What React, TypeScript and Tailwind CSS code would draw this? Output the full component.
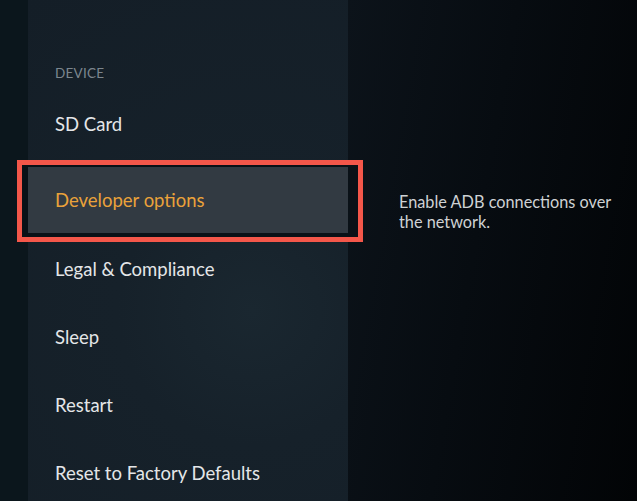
const items = ["Legal & Compliance", "Sleep", "Restart", "Reset to Factory Defaults"];

export default function App() {
  return (
    <div className="flex h-[501px] w-[637px] overflow-hidden bg-[#05090d] font-['Lato',sans-serif]">
      <div className="w-[28px] shrink-0 bg-[#0b161c]" />
      <div className="relative w-[320px] shrink-0 bg-[radial-gradient(circle_at_70%_62%,#1a2730_0%,#16212a_35%,#141e27_100%)]">
        <div className="pl-[27px] pt-[66px] text-[13.5px] leading-[14px] tracking-[0.02em] text-[#7c868e]">DEVICE</div>
        <div className="mt-[10px] flex h-[68px] items-center pl-[27px] pt-[2px] text-[18.5px] text-[#e4e6e8]">SD Card</div>
        <div className="relative mt-[9px] mb-[2px]">
          <div className="absolute left-[-6px] right-[-10px] top-[-2px] bottom-[-4px] bg-[#0a1117]" />
          <div className="relative z-10 flex h-[66px] items-center bg-[#323a42] pl-[27px] pt-[2px] text-[18.5px] text-[#eaa23a]">
            Developer options
          </div>
          <span className="absolute left-[-11px] right-[-15px] top-[-7px] bottom-[-9px] z-20 border-[5px] border-[#f4574a]" />
        </div>
        {items.map((t) => (
          <div key={t} className="flex h-[68px] items-center pl-[27px] pt-[2px] text-[18.5px] text-[#e4e6e8]">
            {t}
          </div>
        ))}
      </div>
      <div className="flex-1 bg-[linear-gradient(100deg,#0c131a_0%,#070c11_45%,#020406_100%)] pl-[51px] pt-[192px]">
        <p className="w-[220px] text-[16.3px] leading-[20px] text-[#cfd2d4]">
          Enable ADB connections over the network.
        </p>
      </div>
    </div>
  );
}
